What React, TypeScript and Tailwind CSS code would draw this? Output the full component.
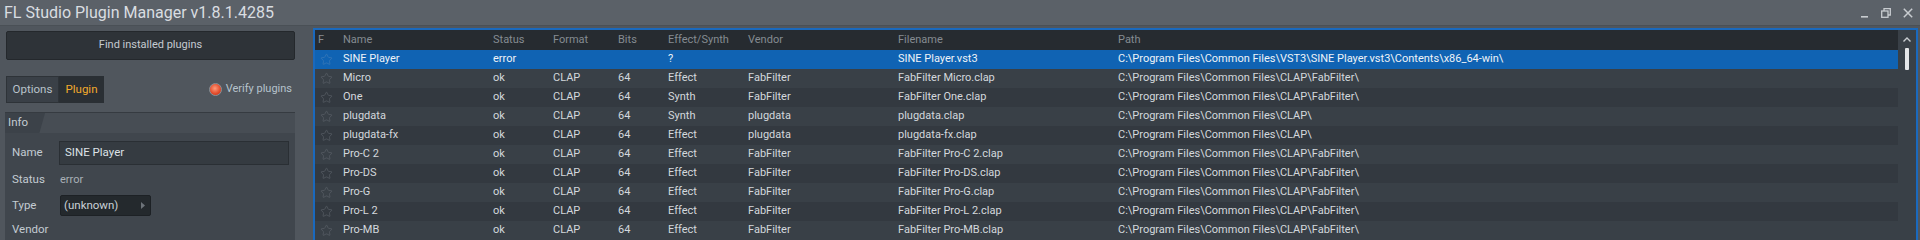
import { Star } from "lucide-react";

const rows = [
  { name: "SINE Player", status: "error", format: "", bits: "", kind: "?", vendor: "", file: "SINE Player.vst3", path: "C:\\Program Files\\Common Files\\VST3\\SINE Player.vst3\\Contents\\x86_64-win\\" },
  { name: "Micro", status: "ok", format: "CLAP", bits: "64", kind: "Effect", vendor: "FabFilter", file: "FabFilter Micro.clap", path: "C:\\Program Files\\Common Files\\CLAP\\FabFilter\\" },
  { name: "One", status: "ok", format: "CLAP", bits: "64", kind: "Synth", vendor: "FabFilter", file: "FabFilter One.clap", path: "C:\\Program Files\\Common Files\\CLAP\\FabFilter\\" },
  { name: "plugdata", status: "ok", format: "CLAP", bits: "64", kind: "Synth", vendor: "plugdata", file: "plugdata.clap", path: "C:\\Program Files\\Common Files\\CLAP\\" },
  { name: "plugdata-fx", status: "ok", format: "CLAP", bits: "64", kind: "Effect", vendor: "plugdata", file: "plugdata-fx.clap", path: "C:\\Program Files\\Common Files\\CLAP\\" },
  { name: "Pro-C 2", status: "ok", format: "CLAP", bits: "64", kind: "Effect", vendor: "FabFilter", file: "FabFilter Pro-C 2.clap", path: "C:\\Program Files\\Common Files\\CLAP\\FabFilter\\" },
  { name: "Pro-DS", status: "ok", format: "CLAP", bits: "64", kind: "Effect", vendor: "FabFilter", file: "FabFilter Pro-DS.clap", path: "C:\\Program Files\\Common Files\\CLAP\\FabFilter\\" },
  { name: "Pro-G", status: "ok", format: "CLAP", bits: "64", kind: "Effect", vendor: "FabFilter", file: "FabFilter Pro-G.clap", path: "C:\\Program Files\\Common Files\\CLAP\\FabFilter\\" },
  { name: "Pro-L 2", status: "ok", format: "CLAP", bits: "64", kind: "Effect", vendor: "FabFilter", file: "FabFilter Pro-L 2.clap", path: "C:\\Program Files\\Common Files\\CLAP\\FabFilter\\" },
  { name: "Pro-MB", status: "ok", format: "CLAP", bits: "64", kind: "Effect", vendor: "FabFilter", file: "FabFilter Pro-MB.clap", path: "C:\\Program Files\\Common Files\\CLAP\\FabFilter\\" },
];

const cols = "grid grid-cols-[28px_150px_60px_65px_50px_80px_150px_220px_1fr] items-center";

export default function App() {
  return (
    <div className="w-[1920px] h-[240px] overflow-hidden bg-[#50565d] text-[11px] font-['Roboto',sans-serif] flex flex-col">
      {/* title bar */}
      <div className="h-[26px] shrink-0 bg-[#5b6168] border-b border-[#4a5056] flex items-center justify-between pl-[4px] pr-[7px]">
        <span className="text-[16px] text-[#d9dde1]">FL Studio Plugin Manager v1.8.1.4285</span>
        <div className="flex items-center gap-[12px] text-[#c8ccd0]">
          <svg width="9" height="10" viewBox="0 0 9 10"><rect x="1" y="8" width="7" height="1.6" fill="currentColor" /></svg>
          <svg width="10" height="10" viewBox="0 0 10 10" fill="none" stroke="currentColor" strokeWidth="1.3"><rect x="0.7" y="3" width="6.3" height="6.3" /><path d="M3 3V0.7h6.3V7H7" /></svg>
          <svg width="10" height="10" viewBox="0 0 10 10" stroke="currentColor" strokeWidth="1.5"><path d="M0.8 0.8L9.2 9.2M9.2 0.8L0.8 9.2" /></svg>
        </div>
      </div>

      <div className="flex flex-1 min-h-0">
        {/* left panel */}
        <div className="w-[313px] shrink-0 pl-[5px] pr-[18px] flex flex-col">
          <div className="ml-[1px] mt-[5px] h-[29px] bg-[#2e3338] border border-[#24282c] rounded-[2px] flex items-center justify-center text-[#c5cbd1] text-[11px]">
            Find installed plugins
          </div>
          <div className="mt-[16px] h-[28px] flex items-center">
            <div className="ml-[1px] h-full w-[53px] bg-[#3a4047] border border-[#2e3338] flex items-center justify-center text-[#b9c3cb] text-[11.5px]">Options</div>
            <div className="h-full w-[45px] bg-[#2a2f34] border border-[#2a2f34] flex items-center justify-center text-[#f2aa2c] text-[11.5px]">Plugin</div>
            <div className="ml-auto flex items-center gap-[4px] pr-[3px]">
              <span className="w-[13px] h-[13px] rounded-full border border-[#8c9196] bg-[radial-gradient(circle_at_45%_40%,#ff9a7a,#e24a2a_60%,#b83218)]" />
              <span className="text-[#b6c3cc] text-[11px]">Verify plugins</span>
            </div>
          </div>
          <div className="mt-[9px] flex-1 bg-[#40464d] border-t border-[#363b41] flex flex-col">
            <div className="h-[20px] relative">
              <div className="absolute inset-0 bg-[#474d54]" />
              <div className="absolute left-0 top-0 h-[20px] w-[40px] bg-[#3c4249] [clip-path:polygon(0_0,100%_0,86%_100%,0_100%)] flex items-center pl-[3px] text-[#c3cbd2] text-[11.5px]">Info</div>
            </div>
            <div className="mt-[8px] flex items-center h-[24px]">
              <span className="w-[54px] pl-[7px] text-[#c3cbd2] text-[11.5px]">Name</span>
              <div className="w-[230px] h-full bg-[#353b41] border border-[#2a2f34] flex items-center pl-[5px] text-[#dde2e6] text-[11.5px]">SINE Player</div>
            </div>
            <div className="mt-[4px] flex items-center h-[22px]">
              <span className="w-[55px] pl-[7px] text-[#c3cbd2] text-[11.5px]">Status</span>
              <span className="text-[#a9b0b6] text-[11px]">error</span>
            </div>
            <div className="mt-[4px] flex items-center h-[21px]">
              <span className="w-[55px] pl-[7px] text-[#c3cbd2] text-[11.5px]">Type</span>
              <div className="w-[91px] h-full bg-[#24292d] border border-[#1d2125] rounded-[2px] flex items-center justify-between pl-[3px] pr-[5px] text-[#c9d0d6] text-[11.5px]">
                <span>(unknown)</span>
                <svg width="4" height="7" viewBox="0 0 4 7"><path d="M0 0L4 3.5L0 7Z" fill="#6d7379" /></svg>
              </div>
            </div>
            <div className="mt-[4px] flex items-center h-[20px]">
              <span className="pl-[7px] text-[#c3cbd2] text-[11.5px]">Vendor</span>
            </div>
          </div>
        </div>

        {/* plugin list */}
        <div className="flex-1 mt-[2px] mr-[2px] border-2 border-b-0 border-[#1a69bd] bg-[#394047] flex min-h-0">
          <div className="flex-1 flex flex-col">
            <div className={`${cols} h-[20px] bg-[#262b30] text-[#858b92]`}>
              <span className="pl-[3px]">F</span>
              <span>Name</span>
              <span>Status</span>
              <span>Format</span>
              <span>Bits</span>
              <span>Effect/Synth</span>
              <span>Vendor</span>
              <span>Filename</span>
              <span>Path</span>
            </div>
            {rows.map((r, i) => (
              <div
                key={r.name}
                className={`${cols} h-[19px] whitespace-nowrap ${i === 0 ? "bg-[#1063b3] text-[#eef3f8]" : i % 2 === 0 ? "bg-[#333940] text-[#d3d8dd]" : "bg-[#394047] text-[#d3d8dd]"}`}
              >
                <span className="pl-[5px] flex items-center">
                  <Star size={13} strokeWidth={1.2} className={i === 0 ? "text-[#3f7bb8]" : "text-[#5b6269]"} />
                </span>
                <span>{r.name}</span>
                <span>{r.status}</span>
                <span>{r.format}</span>
                <span>{r.bits}</span>
                <span>{r.kind}</span>
                <span>{r.vendor}</span>
                <span>{r.file}</span>
                <span>{r.path}</span>
              </div>
            ))}
          </div>
          {/* scrollbar */}
          <div className="w-[18px] shrink-0 flex flex-col items-center pt-[7px]">
            <svg width="8" height="5" viewBox="0 0 8 5" fill="none" stroke="#c9cdd1" strokeWidth="1.4"><path d="M0.5 4.5L4 1L7.5 4.5" /></svg>
            <div className="mt-[6px] w-[4px] h-[22px] bg-[#e4e6e8] rounded-[1px]" />
          </div>
        </div>
      </div>
    </div>
  );
}
